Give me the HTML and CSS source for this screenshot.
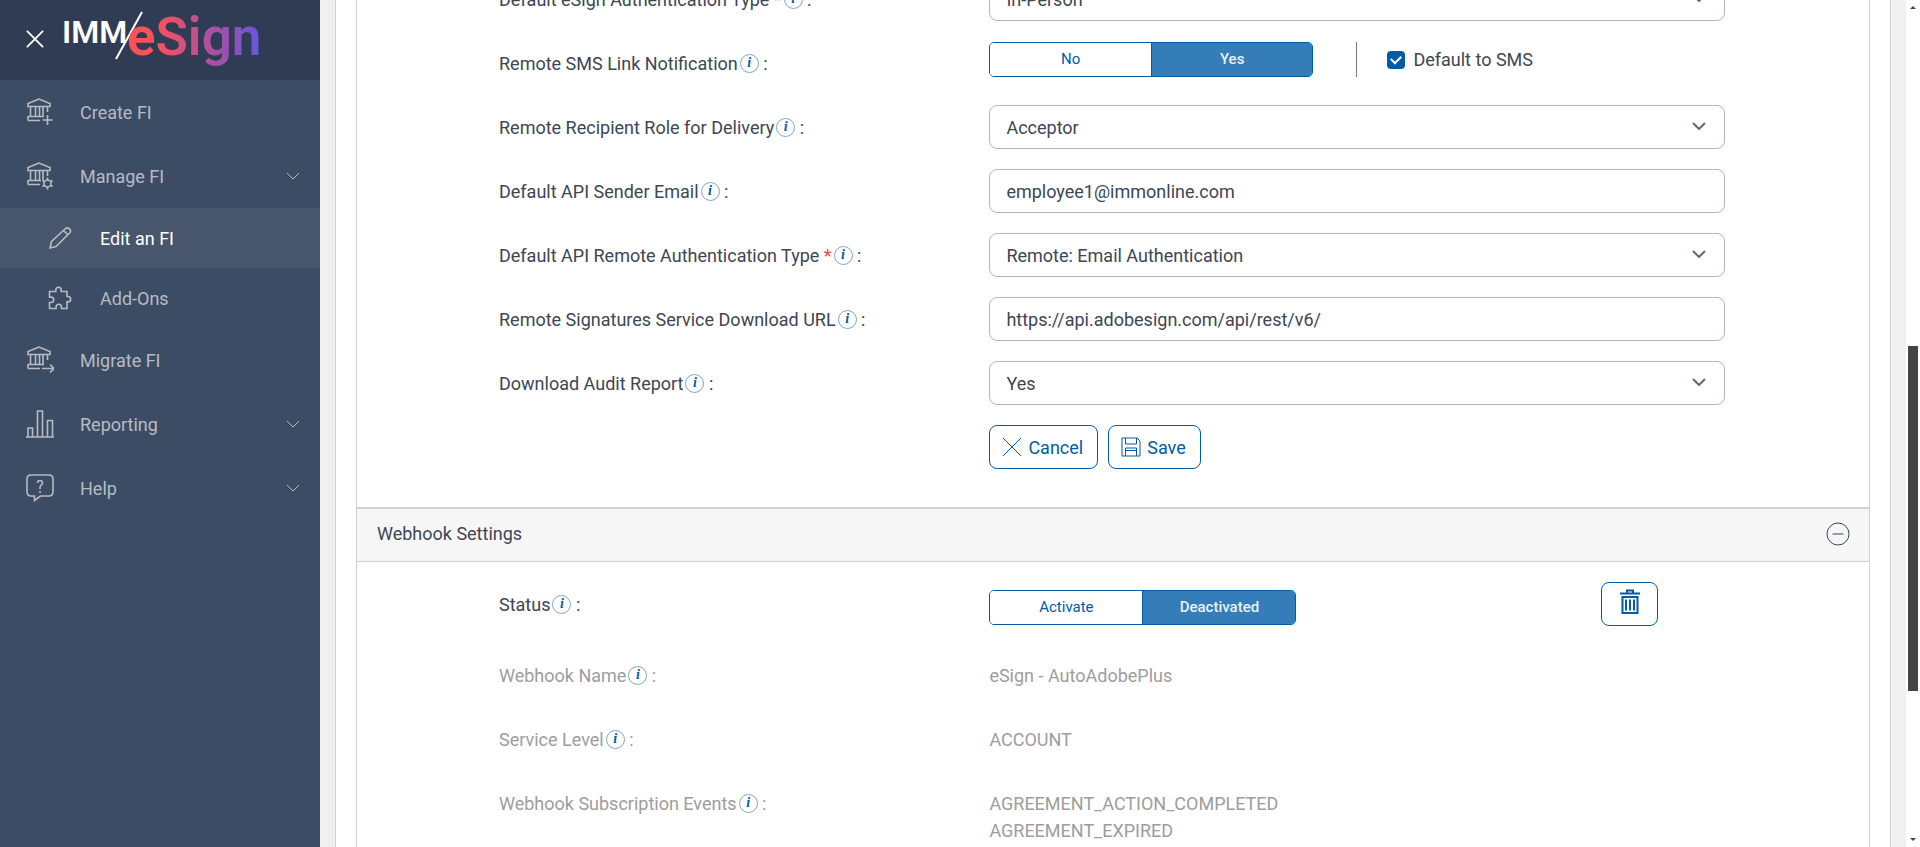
FILE: index.html
```
<!DOCTYPE html>
<html lang="en">
<head>
    <meta charset="UTF-8">
    <meta name="viewport" content="width=device-width, initial-scale=1.0">
    <title>IMM eSign - Edit an FI</title>
    <link rel="stylesheet" href="styles.css">
</head>
<body>

    <!-- Shared icons -->
    <svg class="sprite" aria-hidden="true">
        <symbol id="bank" viewBox="0 0 28 28">
            <path d="M2 8.500V5.500L13 1l11 4.500v3zM4.500 8.500V18M9.500 8.500V18M13.500 8.500V18M17 8.500V18M21.500 8.500V14"/>
        </symbol>
        <symbol id="chevron" viewBox="0 0 14 8">
            <path d="M1 1l6 6 6-6"/>
        </symbol>
        <symbol id="cross" viewBox="0 0 20 20">
            <path d="M1 1l18 18M19 1L1 19"/>
        </symbol>
    </svg>

    <div class="layout">

        <!-- Sidebar -->
        <aside class="sidebar">
            <div class="sidebar-header">
                <button class="menu-close" aria-label="Close menu"><svg width="18" height="18"><use href="#cross"/></svg></button>
                <svg class="logo" width="200" height="71" viewBox="0 0 200 71" role="img" aria-label="IMM eSign">
                    <defs>
                        <linearGradient id="brand" gradientUnits="userSpaceOnUse" x1="68" y1="0" x2="194" y2="0">
                            <stop offset="0.18" stop-color="#ff5257"/>
                            <stop offset="0.45" stop-color="#cf5080"/>
                            <stop offset="0.75" stop-color="#9a50b0"/>
                            <stop offset="1" stop-color="#6c56da"/>
                        </linearGradient>
                    </defs>
                    <text class="logo-imm" x="0" y="34">IMM</text>
                    <path class="logo-slash" d="M54 50L80 3"/>
                    <text class="logo-esign" x="65" y="46">eSign</text>
                </svg>
            </div>
            <nav>
                <a class="nav-item" href="#">
                    <svg class="nav-icon" viewBox="0 0 28 28"><use href="#bank"/><path d="M2 18.500h16M2 22.500h12M2 18v4.500M21.500 17v10M16.500 22h10"/></svg>
                    <span>Create FI</span>
                </a>
                <a class="nav-item" href="#">
                    <svg class="nav-icon" viewBox="0 0 28 28"><use href="#bank"/><path d="M2 18.500h13M2 22.500h12M2 18v4.500"/><circle cx="21.500" cy="21.500" r="3.500"/><path d="M21.500 15.500V18M21.500 25v2.500M16.500 18.500l2 1.200M24.500 23.300l2 1.200M26.500 18.500l-2 1.200M18.500 23.300l-2 1.200"/></svg>
                    <span>Manage FI</span>
                    <svg class="nav-arrow"><use href="#chevron"/></svg>
                </a>
                <a class="nav-item nav-sub active" href="#">
                    <svg class="nav-icon" viewBox="0 0 24 24"><path d="M2 22l1.500-6.500L17.500 2.500q2-1.500 4 .3t.3 4L8 20.500zM15.500 4.500l4.500 4.500"/></svg>
                    <span>Edit an FI</span>
                </a>
                <a class="nav-item nav-sub" href="#">
                    <svg class="nav-icon" viewBox="0 0 24 24"><path d="M1.500 5.500h6.300V4a2.700 2.700 0 0 1 5.400 0v1.500h5.800v5h1a2.700 2.700 0 0 1 0 5.400h-1V22.500h-5.500V21a2.700 2.700 0 0 0-5.400 0v1.500H1.500V16.500H3a2.700 2.700 0 0 0 0-5.400H1.500z"/></svg>
                    <span>Add-Ons</span>
                </a>
                <a class="nav-item" href="#">
                    <svg class="nav-icon" viewBox="0 0 28 28"><use href="#bank"/><path d="M2 18.500h16M2 22.500h12M2 18v4.500M16 22.500h12M24 18.500l4 4-4 4"/></svg>
                    <span>Migrate FI</span>
                </a>
                <a class="nav-item" href="#">
                    <svg class="nav-icon" viewBox="0 0 28 28"><path d="M0 27h28M2 27V18h4.500v9M11.500 27V1h5v26M21.500 27V10.500h5V27"/></svg>
                    <span>Reporting</span>
                    <svg class="nav-arrow"><use href="#chevron"/></svg>
                </a>
                <a class="nav-item" href="#">
                    <svg class="nav-icon" viewBox="0 0 28 28"><path d="M5 1h18q4 0 4 4.500v12q0 4.500-4 4.500h-8.500L8.500 26.500V22H5Q1 22 1 17.500v-12Q1 1 5 1z"/><path d="M11.500 9q.2-2.500 2.500-2.500t2.500 2.300q0 1.500-1.300 2.400T14 14v1M14 17v2"/></svg>
                    <span>Help</span>
                    <svg class="nav-arrow"><use href="#chevron"/></svg>
                </a>
            </nav>
        </aside>

        <!-- Content -->
        <main class="content">
            <div class="page">
                <div class="panel">

                    <!-- eSign settings -->
                    <form class="settings">
                        <div class="row">
                            <label for="auth-type">Default eSign Authentication Type <em>*</em><i class="info">i</i> :</label>
                            <div class="select-box">
                                <select id="auth-type"><option>In-Person</option></select>
                                <svg><use href="#chevron"/></svg>
                            </div>
                        </div>
                        <div class="row">
                            <span class="label">Remote SMS Link Notification<i class="info">i</i> :</span>
                            <div class="sms">
                                <div class="toggle">
                                    <button type="button">No</button>
                                    <button type="button" class="on">Yes</button>
                                </div>
                                <label class="check" for="default-sms"><input type="checkbox" id="default-sms" checked>Default to SMS</label>
                            </div>
                        </div>
                        <div class="row">
                            <label for="role">Remote Recipient Role for Delivery<i class="info">i</i> :</label>
                            <div class="select-box">
                                <select id="role"><option>Acceptor</option></select>
                                <svg><use href="#chevron"/></svg>
                            </div>
                        </div>
                        <div class="row">
                            <label for="email">Default API Sender Email<i class="info">i</i> :</label>
                            <input type="text" id="email" value="employee1@immonline.com">
                        </div>
                        <div class="row">
                            <label for="remote-type">Default API Remote Authentication Type <em>*</em><i class="info">i</i> :</label>
                            <div class="select-box">
                                <select id="remote-type"><option>Remote: Email Authentication</option></select>
                                <svg><use href="#chevron"/></svg>
                            </div>
                        </div>
                        <div class="row">
                            <label for="url">Remote Signatures Service Download URL<i class="info">i</i> :</label>
                            <input type="text" id="url" value="https://api.adobesign.com/api/rest/v6/">
                        </div>
                        <div class="row">
                            <label for="audit">Download Audit Report<i class="info">i</i> :</label>
                            <div class="select-box">
                                <select id="audit"><option>Yes</option></select>
                                <svg><use href="#chevron"/></svg>
                            </div>
                        </div>
                        <div class="row">
                            <div class="actions">
                                <button type="button" class="btn"><svg width="20" height="20"><use href="#cross"/></svg>Cancel</button>
                                <button type="button" class="btn"><svg width="20" height="20" viewBox="0 0 20 20"><path d="M1 1h15l3 3v15H1zM4.500 1v6h11V1M4.500 19v-8h11v8M5 13.500h10"/></svg>Save</button>
                            </div>
                        </div>
                    </form>

                    <!-- Webhook settings -->
                    <div class="panel-header">
                        <h2>Webhook Settings</h2>
                        <button class="collapse" aria-label="Collapse"><svg width="24" height="24" viewBox="0 0 24 24"><circle cx="12" cy="12" r="11"/><path d="M6.500 12h11"/></svg></button>
                    </div>
                    <div class="webhook">
                        <div class="row status">
                            <span class="label">Status<i class="info">i</i> :</span>
                            <div class="status-field">
                                <div class="toggle narrow">
                                    <button type="button">Activate</button>
                                    <button type="button" class="on">Deactivated</button>
                                </div>
                                <button type="button" class="btn trash" aria-label="Delete webhook"><svg width="20" height="26" viewBox="0 0 20 26"><path d="M0 4.500h20M7 4V1.500h6V4M2.500 8h15v16h-15zM6 10.500v11M10 10.500v11M14 10.500v11"/></svg></button>
                            </div>
                        </div>
                        <div class="row muted">
                            <span class="label">Webhook Name<i class="info">i</i> :</span>
                            <span>eSign - AutoAdobePlus</span>
                        </div>
                        <div class="row muted">
                            <span class="label">Service Level<i class="info">i</i> :</span>
                            <span>ACCOUNT</span>
                        </div>
                        <div class="row muted">
                            <span class="label">Webhook Subscription Events<i class="info">i</i> :</span>
                            <span>AGREEMENT_ACTION_COMPLETED<br>AGREEMENT_EXPIRED</span>
                        </div>
                    </div>

                </div>
            </div>
        </main>

        <!-- Scrollbar -->
        <div class="scrollbar" aria-hidden="true">
            <span class="arrow-up"></span>
            <div class="track"><div class="thumb"></div></div>
            <span class="arrow-down"></span>
        </div>

    </div>

</body>
</html>
```

FILE: styles.css
```
* {
    box-sizing: border-box;
}

body {
    margin: 0;
    font-family: Roboto, 'Liberation Sans', sans-serif;
    font-size: 18px;
    line-height: 27px;
    color: #3c4654;
    background-color: #fff;
}

button, input, select {
    font: inherit;
    color: inherit;
}

button {
    cursor: pointer;
}

svg {
    fill: none;
    stroke: currentColor;
}

.sprite {
    display: none;
}

.layout {
    display: flex;
    height: 100vh;
    overflow: hidden;
}

/* Sidebar */
.sidebar {
    flex: 0 0 320px;
    background-color: #3c4c64;
}

.sidebar-header {
    display: flex;
    height: 80px;
    padding: 9px 26px 0;
    background-color: #303c54;
    color: #fff;
}

.menu-close {
    width: 18px;
    height: 60px;
    padding: 0;
    border: none;
    background: none;
}

.menu-close svg {
    display: block;
    stroke-width: 2;
}

.logo {
    flex: none;
    margin-left: 18px;
}

.logo text {
    stroke: none;
    font-weight: 600;
}

.logo-imm {
    fill: #fff;
    font-size: 32px;
}

.logo-esign {
    fill: url(#brand);
    font-size: 53px;
}

.logo-slash {
    stroke-width: 2;
}

.nav-item {
    display: flex;
    align-items: center;
    height: 64px;
    padding: 0 20px 0 26px;
    color: #b6bbc4;
    text-decoration: none;
}

.nav-icon {
    width: 28px;
    height: 28px;
    margin-right: 26px;
    stroke-width: 1.6;
}

.nav-arrow {
    width: 14px;
    height: 8px;
    margin-left: auto;
}

.nav-sub {
    height: 60px;
    padding-left: 48px;
}

.nav-sub .nav-icon {
    width: 24px;
    height: 24px;
    margin-right: 28px;
}

.nav-sub.active {
    background-color: #47566c;
}

.active span {
    color: #fff;
}

/* Content */
.content {
    flex: 1;
    padding: 0 15px;
    background-color: #f0f0f0;
}

.page {
    min-height: 100vh;
    padding: 0 20px;
    border: solid #cfcfd4;
    border-width: 0 1px;
    background-color: #fff;
}

.panel {
    display: flow-root;
    min-height: 100vh;
    border: solid #cfcfd4;
    border-width: 0 1px;
}

.settings {
    display: flex;
    flex-direction: column;
    gap: 20px;
    margin-top: -23px;
    padding-bottom: 38px;
}

.row {
    display: grid;
    grid-template-columns: 2fr 3fr;
    align-items: center;
    min-height: 44px;
    margin: 0 144px 0 142px;
}

.row em {
    color: #e8454f;
    font-style: normal;
}

.info {
    display: inline-block;
    width: 19px;
    height: 19px;
    margin: 0 0 0 2px;
    border: 1px solid #7fa6c6;
    border-radius: 50%;
    font: italic bold 14px/16px 'Liberation Serif', serif;
    text-align: center;
    vertical-align: 3px;
    color: #005ca6;
}

.row input[type="text"],
.row select {
    display: block;
    width: 100%;
    height: 44px;
    padding: 0 16px;
    border: 1px solid #b0b5c1;
    border-radius: 8px;
    background-color: #fff;
    appearance: none;
}

.select-box {
    position: relative;
}

.select-box svg {
    position: absolute;
    top: 17px;
    right: 19px;
    width: 14px;
    height: 8px;
    color: #5c6a80;
    stroke-width: 2;
    pointer-events: none;
}

/* Toggles */
.toggle {
    display: flex;
    width: 324px;
    height: 35px;
    border: 1px solid #005ca6;
    border-radius: 5px;
    overflow: hidden;
}

.toggle.narrow {
    width: 307px;
    margin-top: 6px;
}

.toggle button {
    flex: 1;
    padding: 0;
    border: none;
    background-color: #fff;
    color: #005ca6;
    font-size: 15px;
}

.toggle .on {
    border-left: 1px solid #005ca6;
    background-color: #347db9;
    color: #e8f1f8;
    font-weight: 500;
}

.sms {
    display: flex;
    align-self: start;
    padding-top: 1px;
}

.check {
    display: flex;
    align-items: center;
    margin-left: 43px;
    padding-left: 30px;
    border-left: 1px solid #6d7888;
}

.check input {
    display: grid;
    place-items: center;
    width: 18px;
    height: 18px;
    margin: 0 8px 0 0;
    border-radius: 4px;
    appearance: none;
}

.check input:checked {
    background-color: #005ca6;
}

.check input:checked::before {
    content: "";
    width: 8px;
    height: 5px;
    margin-bottom: 2px;
    border: solid #fff;
    border-width: 0 0 2px 2px;
    transform: rotate(-45deg);
}

/* Buttons */
.actions {
    display: flex;
    grid-column: 2;
    gap: 10px;
}

.btn {
    display: flex;
    align-items: center;
    justify-content: center;
    gap: 6px;
    height: 44px;
    padding: 0 14px 0 12px;
    border: 1px solid #005ca6;
    border-radius: 8px;
    background-color: #fff;
    color: #005ca6;
}

.trash {
    width: 57px;
    padding: 0 0 4px;
    stroke-width: 2;
}

/* Webhook panel */
.panel-header {
    display: flex;
    justify-content: space-between;
    height: 55px;
    padding: 11px 19px 0 20px;
    border-top: 2px solid #cfcfd4;
    border-bottom: 1px solid #cfcfd4;
    background-color: #f6f6f6;
}

.panel-header h2 {
    margin: 0;
    font-size: 18px;
    line-height: 27px;
    font-weight: 400;
}

.collapse {
    height: 28px;
    padding: 0;
    border: none;
    background: none;
}

.collapse svg {
    display: block;
}

.webhook {
    padding-top: 20px;
}

.status-field {
    display: flex;
    align-items: center;
    justify-content: space-between;
    padding-right: 67px;
}

.status {
    margin-bottom: 36px;
}

.muted {
    align-items: start;
    min-height: 64px;
    color: #9d9d9d;
}

/* Scrollbar */
.scrollbar {
    display: flex;
    flex: 0 0 14px;
    flex-direction: column;
    align-items: center;
    padding: 6px 0;
    background-color: #fff;
}

.arrow-up, .arrow-down {
    border: 3px solid transparent;
}

.arrow-up {
    border-top: none;
    border-bottom-color: #444;
}

.arrow-down {
    border-bottom: none;
    border-top-color: #444;
}

.track {
    flex: 1;
}

.thumb {
    width: 10px;
    height: 345px;
    margin-top: 337px;
    background-color: #444;
}
```
